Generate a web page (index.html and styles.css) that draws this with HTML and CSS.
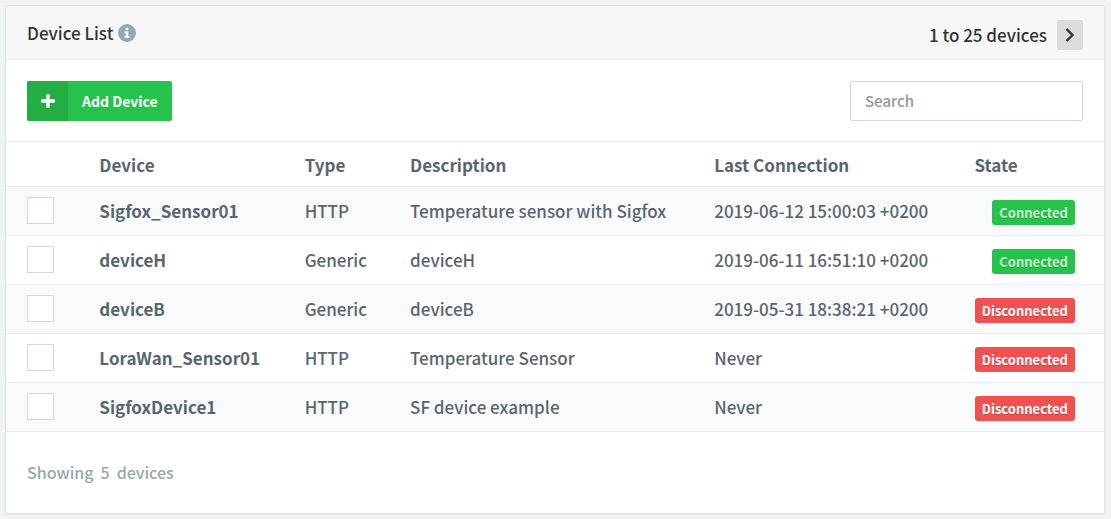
FILE: index.html
```html
<!DOCTYPE html>
<html lang="en">
<head>
<meta charset="utf-8">
<title>Device List</title>
<link rel="stylesheet" href="styles.css">
</head>
<body>
<main class="panel">
  <header class="panel-head">
    <h1 class="title">Device List
      <svg class="info" viewBox="0 0 18 18" aria-hidden="true"><circle cx="9" cy="9" r="9" fill="#98a6ad"/><path d="M7.700 3.800h2.600v2.200H7.700zM6.600 7.300h3.700v4.800h1.100v1.900H6.600v-1.900h1.100V9.200H6.600z" fill="#f6f8f8"/></svg>
    </h1>
    <div class="pager">
      <span>1 to 25 devices</span>
      <button class="next" type="button" aria-label="Next page"><svg viewBox="0 0 10 14"><path d="M1.500 1l6 6-6 6" fill="none" stroke="#333" stroke-width="2.400"/></svg></button>
    </div>
  </header>
  <div class="toolbar">
    <button class="add" type="button">
      <span class="add-icon"><svg viewBox="0 0 14 14"><path d="M6.300 0h1.400q1 0 1 1v4.300H13q1 0 1 1v1.400q0 1-1 1H8.700V13q0 1-1 1H6.300q-1 0-1-1V8.700H1q-1 0-1-1V6.300q0-1 1-1h4.300V1q0-1 1-1z" fill="#fff"/></svg></span>
      <span class="add-label">Add Device</span>
    </button>
    <input class="search" type="search" placeholder="Search" aria-label="Search">
  </div>
  <table class="devices">
    <colgroup><col class="c-check"><col class="c-device"><col class="c-type"><col class="c-desc"><col class="c-last"><col class="c-state"></colgroup>
    <thead>
      <tr><th></th><th>Device</th><th>Type</th><th>Description</th><th>Last Connection</th><th>State</th></tr>
    </thead>
    <tbody>
      <tr><td><input class="check" type="checkbox" aria-label="Select Sigfox_Sensor01"></td><td class="name">Sigfox_Sensor01</td><td>HTTP</td><td>Temperature sensor with Sigfox</td><td>2019-06-12 15:00:03 +0200</td><td class="state"><span class="badge on">Connected</span></td></tr>
      <tr><td><input class="check" type="checkbox" aria-label="Select deviceH"></td><td class="name">deviceH</td><td>Generic</td><td>deviceH</td><td>2019-06-11 16:51:10 +0200</td><td class="state"><span class="badge on">Connected</span></td></tr>
      <tr><td><input class="check" type="checkbox" aria-label="Select deviceB"></td><td class="name">deviceB</td><td>Generic</td><td>deviceB</td><td>2019-05-31 18:38:21 +0200</td><td class="state"><span class="badge off">Disconnected</span></td></tr>
      <tr><td><input class="check" type="checkbox" aria-label="Select LoraWan_Sensor01"></td><td class="name">LoraWan_Sensor01</td><td>HTTP</td><td>Temperature Sensor</td><td>Never</td><td class="state"><span class="badge off">Disconnected</span></td></tr>
      <tr><td><input class="check" type="checkbox" aria-label="Select SigfoxDevice1"></td><td class="name">SigfoxDevice1</td><td>HTTP</td><td>SF device example</td><td>Never</td><td class="state"><span class="badge off">Disconnected</span></td></tr>
    </tbody>
  </table>
  <footer class="foot"><span>Showing</span><span>5</span><span>devices</span></footer>
</main>
</body>
</html>
```
FILE: styles.css
```css
* { box-sizing: border-box; }
body {
  margin: 0;
  padding: 5px 6px 5px 5px;
  background: #eff3f4;
  color: #58666e;
  font: 500 17px/24px "Noto Sans CJK SC", "Noto Sans", sans-serif;
}
.panel {
  background: #fff;
  border: 1px solid #dee5e7;
  border-radius: 2px;
  box-shadow: 0 1px 1px rgba(0, 0, 0, 0.05);
  min-height: calc(100vh - 10px);
}
.panel-head {
  display: flex;
  align-items: center;
  justify-content: space-between;
  height: 54px;
  padding: 0 21px;
  background: #f6f8f8;
  border-bottom: 1px solid #edf1f2;
  color: #333;
}
.title {
  display: flex;
  align-items: center;
  gap: 5px;
  margin: 0;
  font-size: 17px;
  font-weight: 500;
}
.info { width: 18px; height: 18px; }
.pager { display: flex; align-items: center; gap: 10px; padding-top: 4px; }
.next {
  display: grid;
  place-items: center;
  width: 26px;
  height: 30px;
  padding: 0;
  border: 0;
  border-radius: 2px;
  background: #dcdcdc;
}
.next svg { width: 10px; height: 14px; }
.toolbar {
  display: flex;
  align-items: center;
  justify-content: space-between;
  padding: 21px 21px 20px;
}
.add {
  display: flex;
  height: 40px;
  padding: 0;
  border: 0;
  border-radius: 2px;
  overflow: hidden;
  background: #27c24c;
  color: #fff;
  font: 700 14px/40px "Noto Sans CJK SC", "Noto Sans", sans-serif;
}
.add-icon { display: grid; place-items: center; width: 41px; height: 40px; background: #23ad44; }
.add-icon svg { width: 14px; height: 14px; }
.add-label { padding: 0 14px; }
.search {
  width: 233px;
  height: 40px;
  padding: 0 14px 2px;
  border: 1px solid #cfdadd;
  border-radius: 2px;
  font: 500 15px/24px "Noto Sans CJK SC", "Noto Sans", sans-serif;
}
.search::placeholder { color: #999; opacity: 1; }
.devices { width: 100%; table-layout: fixed; border-collapse: collapse; }
.c-check { width: 8.5%; }
.c-device { width: 18.7%; }
.c-type { width: 9.6%; }
.c-desc { width: 27.7%; }
.c-last { width: 23.7%; }
th, td { height: 49px; padding: 0 0 1px; border-bottom: 1px solid #e6eeef; text-align: left; white-space: nowrap; }
th { height: 45px; padding-top: 3px; border-top: 1px solid #e6eeef; font-weight: 700; }
.name { font-weight: 700; }
th:first-child, td:first-child { padding-left: 21px; }
tbody tr:nth-child(odd) { background: #f9fafc; }
.check {
  appearance: none;
  display: block;
  width: 27px;
  height: 27px;
  margin: 0;
  border: 1px solid #cfdadd;
  background: #fff;
}
.state { padding: 2px 29px 0 0; text-align: right; }
.badge {
  display: inline-block;
  padding: 0 7px;
  border-radius: 3px;
  color: #fff;
  font: 700 13px/25px "Noto Sans CJK SC", "Noto Sans", sans-serif;
  text-shadow: 0 1px 0 rgba(0, 0, 0, 0.2);
}
.on { background: #27c24c; color: #c7f0d1; }
.off { background: #f05050; }
.foot { display: flex; gap: 7px; padding: 28px 21px; color: #98a6ad; font-size: 16px; }
```
